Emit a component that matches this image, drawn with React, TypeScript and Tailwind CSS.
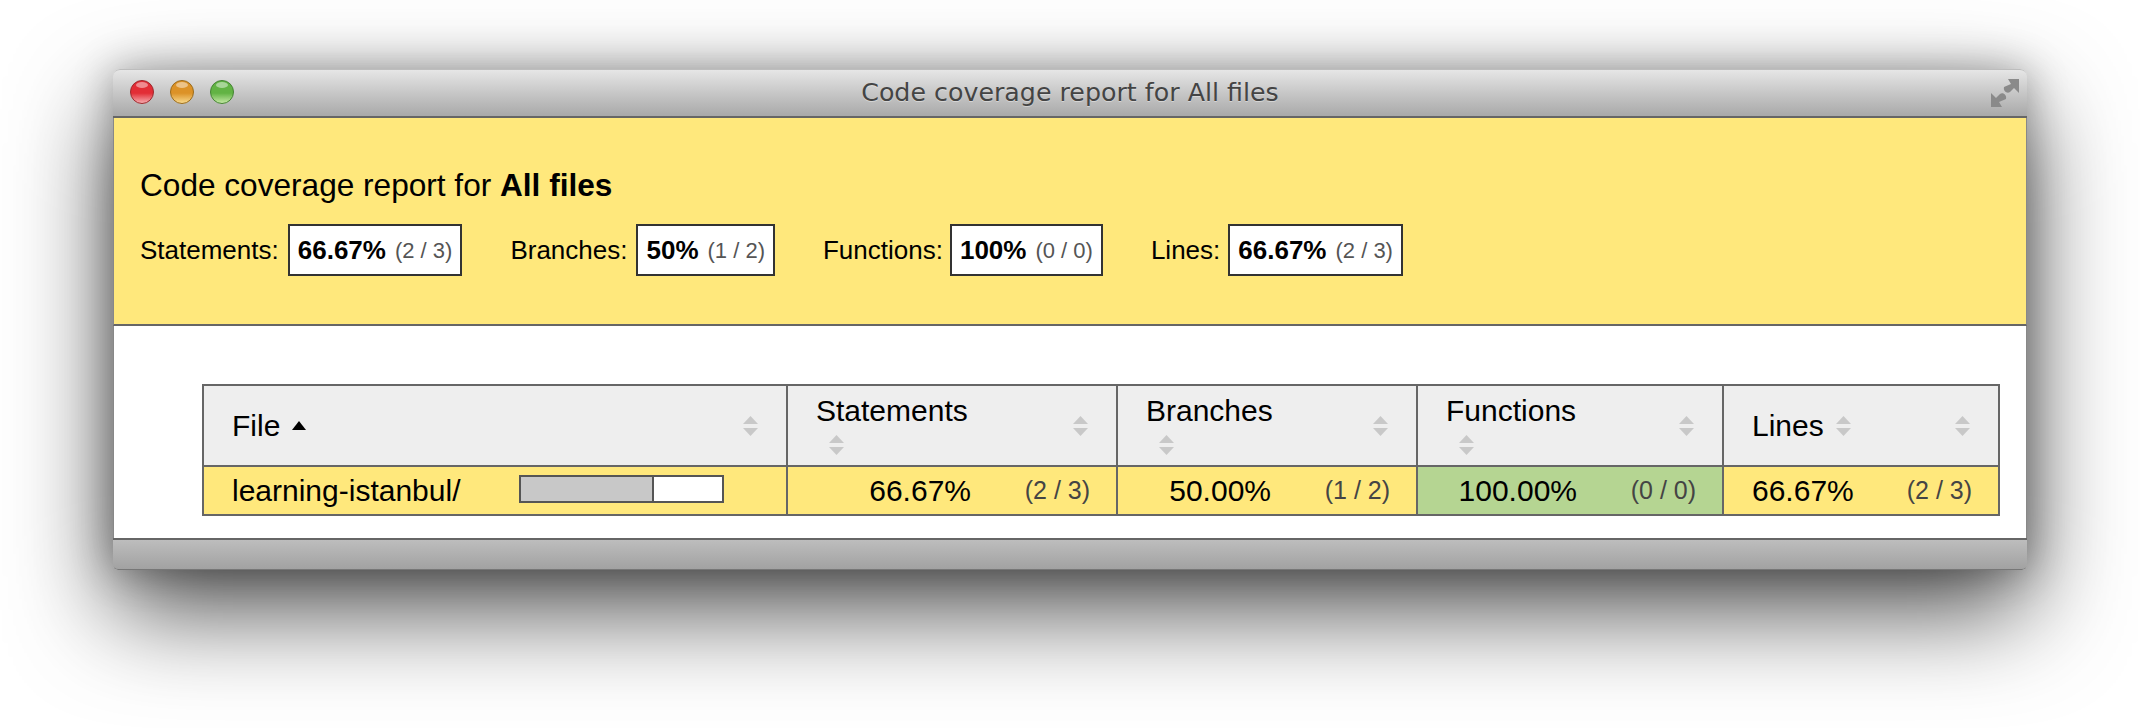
import React from "react";

const font = "font-['Liberation_Sans',Arial,sans-serif]";

const summary = [
  { label: "Statements:", pct: "66.67%", frac: "(2 / 3)", gap: "gap-[9px]" },
  { label: "Branches:", pct: "50%", frac: "(1 / 2)", gap: "gap-[9px]" },
  { label: "Functions:", pct: "100%", frac: "(0 / 0)", gap: "gap-[7px]" },
  { label: "Lines:", pct: "66.67%", frac: "(2 / 3)", gap: "gap-[8px]" },
];

const columns = [
  { name: "Statements", pct: "66.67%", frac: "(2 / 3)", width: "w-[330px]", pctW: "w-[183px]", bg: "bg-[#ffe87c]" },
  { name: "Branches", pct: "50.00%", frac: "(1 / 2)", width: "w-[300px]", pctW: "w-[153px]", bg: "bg-[#ffe87c]" },
  { name: "Functions", pct: "100.00%", frac: "(0 / 0)", width: "w-[306px]", pctW: "w-[159px]", bg: "bg-[#b5d592]" },
];

// double arrow shown on unsorted columns
const SortIcon = ({ className = "" }: { className?: string }) => (
  <svg width="15" height="20" viewBox="0 0 15 20" className={className}>
    <path d="M7.5 0 L15 8 H0 Z" fill="#c8c8c8" />
    <path d="M0 12 H15 L7.5 20 Z" fill="#c8c8c8" />
  </svg>
);

const Light = ({ id, top, bottom, ring }: { id: string; top: string; bottom: string; ring: string }) => (
  <svg width="24" height="24" viewBox="0 0 24 24">
    <defs>
      <linearGradient id={id} x1="0" y1="0" x2="0" y2="1">
        <stop offset="0" stopColor={top} />
        <stop offset="0.55" stopColor={top} />
        <stop offset="1" stopColor={bottom} />
      </linearGradient>
    </defs>
    <circle cx="12" cy="12" r="11.5" fill={`url(#${id})`} stroke={ring} />
    <ellipse cx="12" cy="5" rx="6" ry="3" fill="#fff" opacity="0.45" />
  </svg>
);

export default function App() {
  return (
    <div className={`w-[2140px] h-[728px] bg-white pt-[69px] pl-[113px] overflow-hidden ${font}`}>
      <div className="w-[1914px] rounded-t-[7px] rounded-b-[5px] shadow-[0_40px_100px_rgba(0,0,0,0.7),0_0_40px_rgba(0,0,0,0.3)]">
        {/* title bar */}
        <div className="relative h-[49px] flex items-center justify-center rounded-t-[7px] border-t border-[#bdbdbd] border-b-2 border-b-[#666] bg-linear-to-b from-[#e6e6e6] to-[#a9a9a9]">
          <div className="absolute left-[17px] top-[10px] flex gap-4">
            <Light id="red" top="#e22d36" bottom="#f7b0b4" ring="#9c2a2e" />
            <Light id="amber" top="#dc9227" bottom="#f9dc90" ring="#9a6c1e" />
            <Light id="green" top="#62b344" bottom="#c8eaa8" ring="#468435" />
          </div>
          <span className="font-['DejaVu_Sans',sans-serif] text-[25.3px] text-[#444] [text-shadow:0_1px_0_rgba(255,255,255,0.4)]">
            Code coverage report for All files
          </span>
          <svg width="28" height="28" viewBox="0 0 28 28" className="absolute right-[8px] top-[9px]">
            <path d="M17 0 H28 V14 L23 9 L19 13 C16 15 12 12 13 8 L20 5 Z" fill="#8a8a8a" />
            <path d="M11 28 H0 V14 L5 19 L9 15 C12 13 16 16 15 20 L8 23 Z" fill="#8a8a8a" />
          </svg>
        </div>

        {/* summary */}
        <div className="h-[208px] bg-[#ffe87c] border-x border-[#888] border-b-2 border-b-[#666] pl-[26px] pt-[48px] text-black">
          <h1 className="text-[31.6px] leading-[38px]">
            Code coverage report for <span className="font-bold">All files</span>
          </h1>
          <div className="flex gap-[48px] mt-[20px]">
            {summary.map((s) => (
              <div key={s.label} className={`flex items-center ${s.gap} text-[26px]`}>
                <span>{s.label}</span>
                <span className="h-[52px] px-[8px] flex items-center gap-[9px] bg-white border-2 border-[#333]">
                  <span className="font-bold">{s.pct}</span>
                  <span className="text-[22px] text-[#555]">{s.frac}</span>
                </span>
              </div>
            ))}
          </div>
        </div>

        {/* table */}
        <div className="h-[212px] bg-white border-x border-[#888] pl-[88px] pt-[58px]">
          <table className="border-collapse table-fixed w-[1796px] text-[30px] text-black">
            <thead>
              <tr className="h-[81px] bg-[#eeeeee]">
                <th className="w-[584px] border-2 border-[#666] font-normal text-left pl-[28px] pr-[28px]">
                  <div className="flex items-center">
                    <span>File</span>
                    <svg width="14" height="9" viewBox="0 0 14 9" className="ml-[12px]">
                      <path d="M7 0 L14 9 H0 Z" fill="#000" />
                    </svg>
                    <SortIcon className="ml-auto" />
                  </div>
                </th>
                {columns.map((c) => (
                  <th key={c.name} className={`${c.width} border-2 border-[#666] font-normal text-left pl-[28px] pr-[28px]`}>
                    <div className="flex items-center justify-between">
                      <div className="flex flex-col pb-[10px]">
                        <span className="leading-[48px] h-[48px]">{c.name}</span>
                        <SortIcon className="ml-[13px]" />
                      </div>
                      <SortIcon />
                    </div>
                  </th>
                ))}
                <th className="w-[276px] border-2 border-[#666] font-normal text-left pl-[28px] pr-[28px]">
                  <div className="flex items-center">
                    <span>Lines</span>
                    <SortIcon className="ml-[12px]" />
                    <SortIcon className="ml-auto" />
                  </div>
                </th>
              </tr>
            </thead>
            <tbody>
              <tr className="h-[49px]">
                <td className="border-2 border-[#666] bg-[#ffe87c] pl-[28px]">
                  <div className="flex items-center">
                    <span className="w-[287px]">learning-istanbul/</span>
                    <div className="flex w-[205px] h-[28px] mb-[3px] border-2 border-[#555] bg-white">
                      <div className="w-[133px] bg-[#c8c8c8] border-r-2 border-[#555]" />
                    </div>
                  </div>
                </td>
                {columns.map((c) => (
                  <td key={c.name} className={`border-2 border-[#666] ${c.bg}`}>
                    <div className="flex items-center">
                      <span className={`${c.pctW} text-right`}>{c.pct}</span>
                      <span className="ml-auto pr-[26px] text-[25px] text-[#444]">{c.frac}</span>
                    </div>
                  </td>
                ))}
                <td className="border-2 border-[#666] bg-[#ffe87c] pl-[28px]">
                  <div className="flex items-center">
                    <span>66.67%</span>
                    <span className="ml-auto pr-[26px] text-[25px] text-[#444]">(2 / 3)</span>
                  </div>
                </td>
              </tr>
            </tbody>
          </table>
        </div>

        {/* footer */}
        <div className="h-[32px] rounded-b-[5px] border-t-2 border-[#666] border-b border-b-[#777] bg-linear-to-b from-[#bdbdbd] to-[#a2a2a2]" />
      </div>
    </div>
  );
}
